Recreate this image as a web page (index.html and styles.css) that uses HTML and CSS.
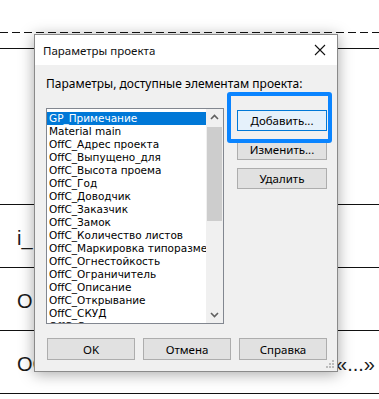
FILE: index.html
```html
<!DOCTYPE html>
<html lang="ru">

<head>
    <meta charset="UTF-8">
    <title>Параметры проекта</title>
    <link rel="stylesheet" href="styles.css">
</head>

<body>
    <div class="sheet">
        <div class="dash-line"></div>
        <div class="solid-line top-line"></div>
        <div class="row first-row"></div>
        <div class="row"><span class="cell-text">i_</span></div>
        <div class="row"><span class="cell-text">O</span></div>
        <div class="row"><span class="cell-text">ОС</span><span class="cell-text right">«...»</span></div>

        <div class="dialog">
            <div class="titlebar">
                <span class="title">Параметры проекта</span>
                <svg class="close" width="12" height="12" viewBox="0 0 12 12">
                    <path d="M1 1 L11 11 M11 1 L1 11" stroke="#111" stroke-width="1.1" fill="none" />
                </svg>
            </div>
            <div class="dlg-body">
                <div class="caption">Параметры, доступные элементам проекта:</div>
                <div class="main">
                    <div class="listbox">
                        <ul class="items">
                            <li class="selected">GP_Примечание</li>
                            <li>Material main</li>
                            <li>OffC_Адрес проекта</li>
                            <li>OffC_Выпущено_для</li>
                            <li>OffC_Высота проема</li>
                            <li>OffC_Год</li>
                            <li>OffC_Доводчик</li>
                            <li>OffC_Заказчик</li>
                            <li>OffC_Замок</li>
                            <li>OffC_Количество листов</li>
                            <li>OffC_Маркировка типоразмера</li>
                            <li>OffC_Огнестойкость</li>
                            <li>OffC_Ограничитель</li>
                            <li>OffC_Описание</li>
                            <li>OffC_Открывание</li>
                            <li>OffC_СКУД</li>
                            <li>OffC_Стадия</li>
                        </ul>
                        <div class="scrollbar">
                            <svg class="arrow" width="17" height="17" viewBox="0 0 17 17">
                                <path d="M5 10 L8.5 6.5 L12 10" stroke="#606060" stroke-width="1.6" fill="none" />
                            </svg>
                            <div class="track">
                                <div class="thumb"></div>
                            </div>
                            <svg class="arrow" width="17" height="17" viewBox="0 0 17 17">
                                <path d="M5 7 L8.5 10.5 L12 7" stroke="#606060" stroke-width="1.6" fill="none" />
                            </svg>
                        </div>
                    </div>
                    <div class="side-buttons">
                        <button class="btn default">Добавить...</button>
                        <button class="btn">Изменить...</button>
                        <button class="btn">Удалить</button>
                    </div>
                </div>
                <div class="bottom-buttons">
                    <button class="btn">OK</button>
                    <button class="btn">Отмена</button>
                    <button class="btn">Справка</button>
                </div>
            </div>
            <svg class="grip" width="10" height="10" viewBox="0 0 10 10">
                <rect x="7" y="1" width="2" height="2" fill="#bcbcbc" />
                <rect x="4" y="4" width="2" height="2" fill="#bcbcbc" />
                <rect x="7" y="4" width="2" height="2" fill="#bcbcbc" />
                <rect x="1" y="7" width="2" height="2" fill="#bcbcbc" />
                <rect x="4" y="7" width="2" height="2" fill="#bcbcbc" />
                <rect x="7" y="7" width="2" height="2" fill="#bcbcbc" />
            </svg>
        </div>

        <div class="highlight"></div>
    </div>
</body>

</html>
```

FILE: styles.css
```css
body {
    margin: 0;
    background-color: white;
    font-family: "Liberation Sans", Arial, sans-serif;
}

.sheet {
    position: relative;
    width: 379px;
    height: 399px;
    overflow: hidden;
}

.dash-line {
    margin-top: 32px;
    height: 1px;
    background: repeating-linear-gradient(90deg, #111 0 8px, transparent 8px 12px);
}

.solid-line {
    height: 1px;
    background-color: #111;
}

.top-line {
    margin-top: 15px;
}

.row {
    height: 62px;
    border-bottom: 1px solid #111;
    display: flex;
    align-items: center;
    justify-content: space-between;
    padding: 0 0 0 17px;
}

.first-row {
    height: 155px;
}

.cell-text {
    font-size: 20px;
    color: #1a1a1a;
    padding-top: 4px;
}

.cell-text.right {
    padding-right: 4px;
}

/* dialog */
.dialog {
    position: absolute;
    left: 34px;
    top: 34px;
    width: 302px;
    height: 336px;
    border: 1px solid #8a8a8a;
    background-color: #f0f0f0;
    box-shadow: 0 2px 14px rgba(0, 0, 0, 0.35);
    font-family: "Noto Sans", sans-serif;
    font-size: 12px;
    color: #000;
}

.titlebar {
    height: 30px;
    background-color: white;
    display: flex;
    align-items: center;
    justify-content: space-between;
    padding: 0 11px 0 8px;
}

.title {
    font-size: 11.5px;
    color: #111;
}

.dlg-body {
    padding: 10px 10px 0 11px;
}

.caption {
    height: 18px;
    line-height: 18px;
}

.main {
    display: flex;
    gap: 13px;
    margin-top: 15px;
}

.listbox {
    width: 176px;
    height: 214px;
    border: 1px solid #828790;
    background-color: white;
    display: flex;
    overflow: hidden;
}

.items {
    list-style: none;
    margin: 0;
    padding: 3px 0 0 0;
    flex: 1;
    min-width: 0;
    overflow: hidden;
    font-family: "DejaVu Sans", sans-serif;
    font-size: 10.5px;
}

.items li {
    height: 13px;
    line-height: 13px;
    padding-left: 2px;
    white-space: nowrap;
}

.items li.selected {
    background-color: #0078d7;
    color: white;
}

.scrollbar {
    width: 17px;
    flex-shrink: 0;
    background-color: #f0f0f0;
    display: flex;
    flex-direction: column;
}

.arrow {
    display: block;
}

.track {
    flex: 1;
}

.thumb {
    margin: 1px 1px 0 1px;
    height: 94px;
    background-color: #cdcdcd;
}

.side-buttons {
    display: flex;
    flex-direction: column;
    gap: 8px;
    padding-top: 2px;
}

.btn {
    width: 90px;
    height: 21px;
    border: 1px solid #adadad;
    background-color: #e1e1e1;
    font-family: "Noto Sans", sans-serif;
    font-size: 11.5px;
    color: #000;
    padding: 0;
}

.btn.default {
    border-color: #0078d7;
    background-color: #e5f1fb;
}

.bottom-buttons {
    display: flex;
    gap: 8px;
    margin-top: 14px;
    padding-left: 1px;
}

.bottom-buttons .btn {
    width: 88px;
    height: 22px;
}

.grip {
    position: absolute;
    right: 2px;
    bottom: 2px;
}

.highlight {
    position: absolute;
    left: 227px;
    top: 92px;
    width: 97px;
    height: 43px;
    border: 4px solid #0a84ff;
    border-radius: 3px;
}
```
